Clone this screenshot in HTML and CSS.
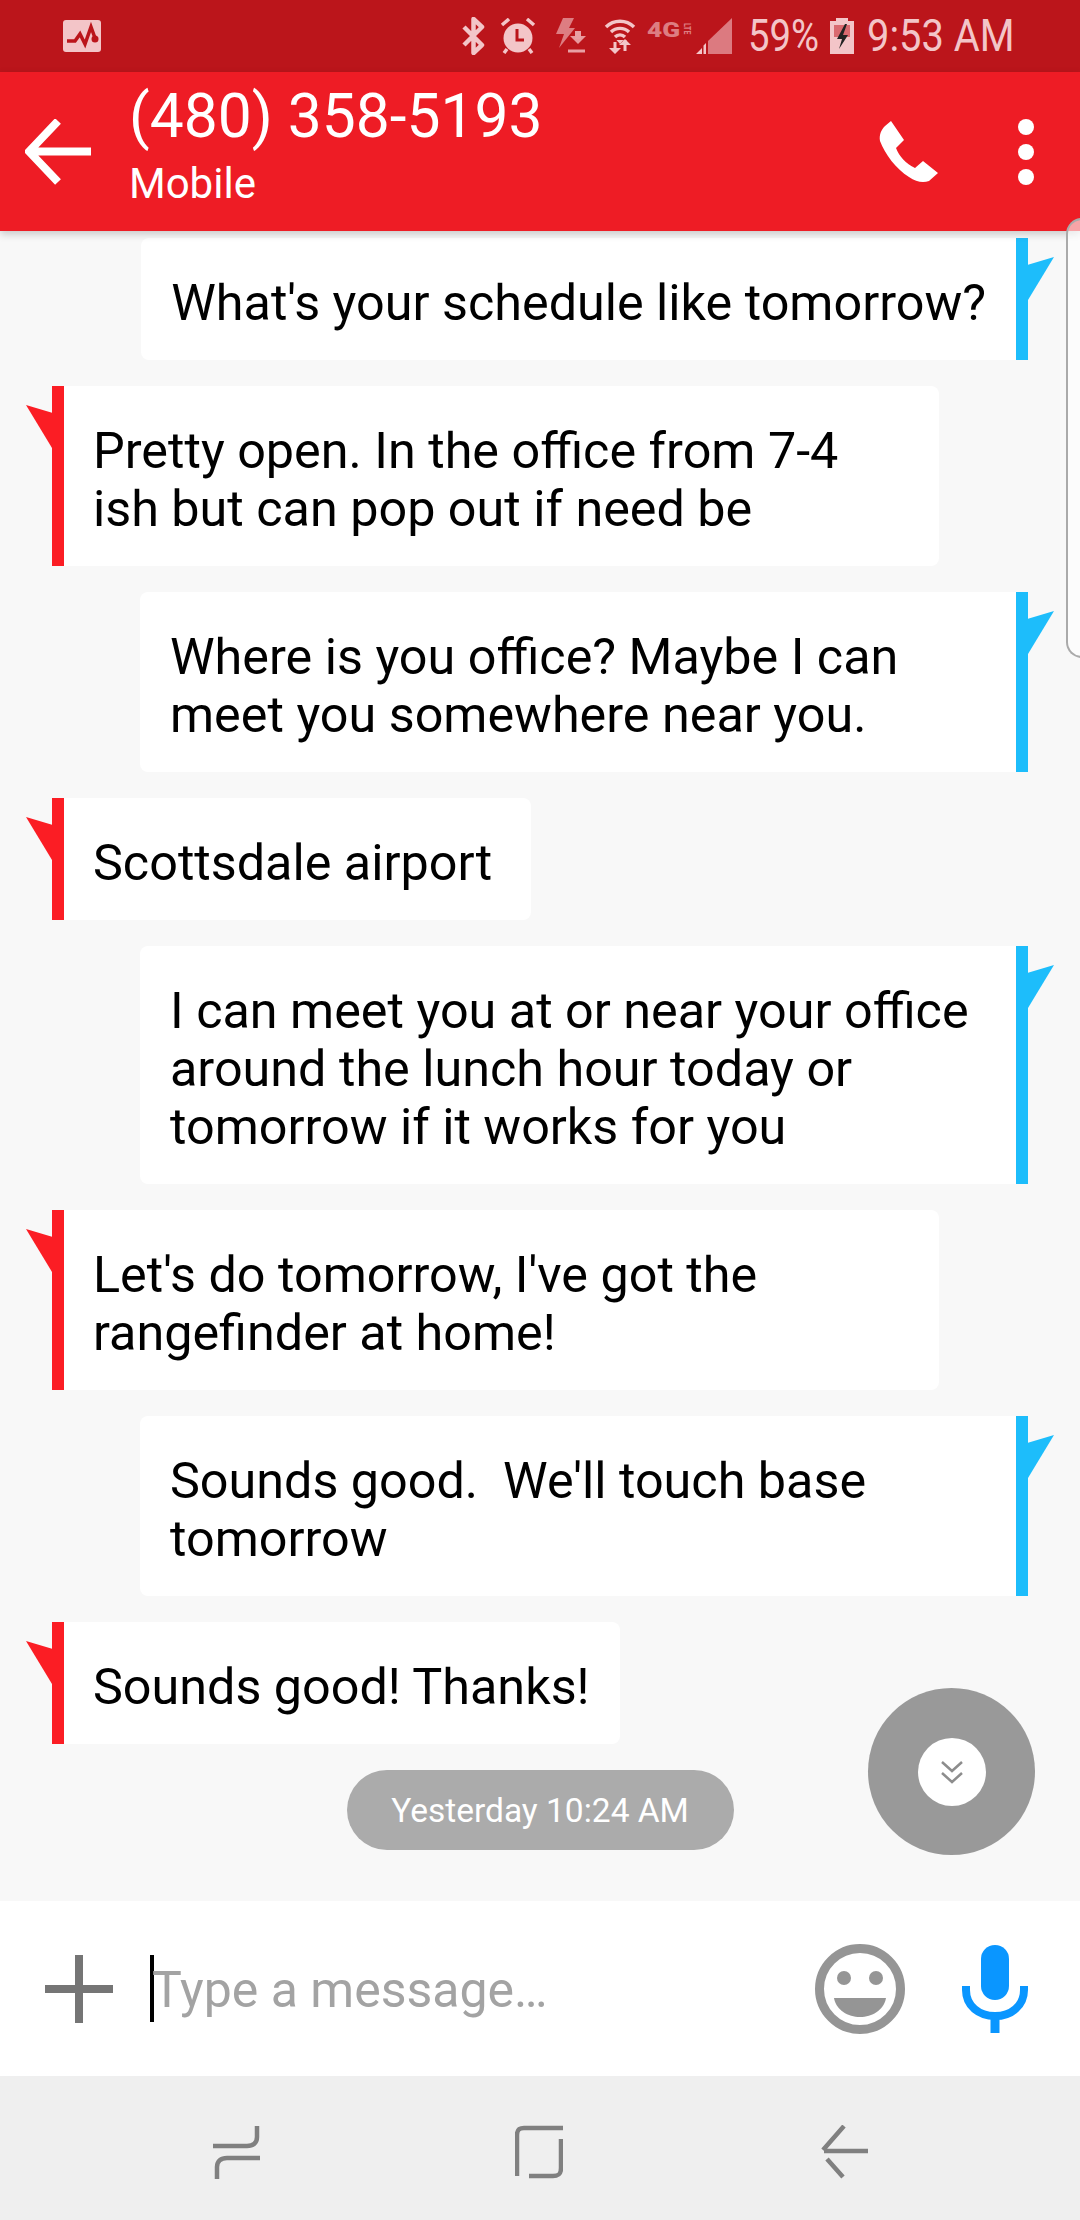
FILE: index.html
```html
<!DOCTYPE html>
<html>
<head>
  <title>Messages</title>
  <link rel="stylesheet" href="styles.css">
</head>
<body>
  <div class="screen">
    <div class="status-bar">
      <svg class="st-pulse" viewBox="0 0 38 32"><rect width="38" height="32" rx="3" fill="#f3c5c8"/><path d="M4 21h8l5-7 5 10 6-17 4 11" fill="none" stroke="#bb151b" stroke-width="3.500"/><circle cx="32" cy="19" r="3.500" fill="#bb151b"/></svg>
      <div class="st-right">
        <svg class="st-bt" viewBox="0 0 25 38"><path d="M3 10l18 18-8.500 8V2l8.500 8L3 28" fill="none" stroke="#f3c5c8" stroke-width="4.500" stroke-linejoin="round"/></svg>
        <svg class="st-alarm" viewBox="0 0 36 36"><circle cx="18" cy="20" r="14.500" fill="#f3c5c8"/><path d="M2 7l7-6M34 7l-7-6M7 31l-3 4M29 31l3 4" stroke="#f3c5c8" stroke-width="3.500" fill="none"/><path d="M17 11v11h7" stroke="#bb151b" stroke-width="3" fill="none"/></svg>
        <svg class="st-flash" viewBox="0 0 31 36"><path d="M8 0h11l-5 10h6L4 30l5-14H1z" fill="#dd7d82"/><path d="M15 18l8 8 8-8z" fill="#e8999d"/><path d="M23 13v8" stroke="#e8a0a4" stroke-width="6"/><path d="M13 33h17" stroke="#e8a0a4" stroke-width="3"/></svg>
        <svg class="st-wifi" viewBox="0 0 32 36"><path d="M2 9a20 20 0 0 1 28 0M7 14a13 13 0 0 1 18 0M11 19a7 7 0 0 1 10 0" fill="none" stroke="#f3c5c8" stroke-width="3.400"/><path d="M16 26l-3.500-4h7z" fill="#f3c5c8"/><path d="M11 24v8M21 22v11" stroke="#f3c5c8" stroke-width="3"/><path d="M5 30h12l-6 6zM15 27h12l-6-6z" fill="#f3c5c8"/></svg>
        <span class="st-lte">4G<span class="st-lte-small">LTE</span></span>
        <svg class="st-signal" viewBox="0 0 36 36"><path d="M36 0v36H12V23z" fill="#dc7a80"/><path d="M6 30v6H0zM10 25v11H7.500V27.500z" fill="#f3c5c8"/></svg>
        <span class="st-text st-pct">59%</span>
        <svg class="st-batt" viewBox="0 0 24 36"><path d="M6 0h12v3h6v33H0V3h6z" fill="#f3c5c8"/><path d="M4 7h16v12H4z" fill="#d96a70"/><path d="M15 6L7 21h5l-3 10 9-14h-5l4-11z" fill="#222"/></svg>
        <span class="st-text st-time">9:53 AM</span>
      </div>
    </div>

    <div class="app-bar">
      <svg class="back" viewBox="0 0 66 66"><path d="M66 32.500H6M33 2L4 32.500 33 63" fill="none" stroke="#fff" stroke-width="8"/></svg>
      <div class="contact">
        <div class="number">(480) 358-5193</div>
        <div class="kind">Mobile</div>
      </div>
      <svg class="phone" viewBox="0 0 60 62"><path d="M12 0l13 19-8 8c3 8 10 16 19 20l8-7 15 12-9 8c-6 2-13 1-20-4C17 48 6 33 1 20c-1-6 1-11 5-15z" fill="#fff"/></svg>
      <div class="dots"><i></i><i></i><i></i></div>
    </div>

    <div class="thread">
      <div class="msg out">
        <div class="bubble">What's your schedule like tomorrow?</div>
      </div>
      <div class="msg in wide">
        <div class="bubble">Pretty open. In the office from 7-4<br>ish but can pop out if need be</div>
      </div>
      <div class="msg out wide">
        <div class="bubble">Where is you office? Maybe I can<br>meet you somewhere near you.</div>
      </div>
      <div class="msg in loose">
        <div class="bubble">Scottsdale airport</div>
      </div>
      <div class="msg out wide">
        <div class="bubble">I can meet you at or near your office<br>around the lunch hour today or<br>tomorrow if it works for you</div>
      </div>
      <div class="msg in wide">
        <div class="bubble">Let's do tomorrow, I've got the<br>rangefinder at home!</div>
      </div>
      <div class="msg out wide">
        <div class="bubble">Sounds good.  We'll touch base<br>tomorrow</div>
      </div>
      <div class="msg in">
        <div class="bubble">Sounds good! Thanks!</div>
      </div>
      <div class="stamp">Yesterday 10:24 AM</div>

      <div class="scroll-btn">
        <div class="scroll-inner">
          <svg viewBox="0 0 24 24" width="24" height="24"><path d="M2 2l10 9 10-9M2 13l10 9 10-9" fill="none" stroke="#8d8d8d" stroke-width="2.500"/></svg>
        </div>
      </div>
    </div>

    <div class="composer">
      <svg class="plus" viewBox="0 0 68 68"><path d="M34 0v68M0 34h68" stroke="#757575" stroke-width="8"/></svg>
      <div class="field"><span class="caret"></span><span class="hint">Type a message…</span></div>
      <svg class="smile" viewBox="0 0 90 90"><circle cx="45" cy="45" r="40.500" fill="none" stroke="#959595" stroke-width="9"/><circle cx="29" cy="34" r="7" fill="#959595"/><circle cx="61" cy="34" r="7" fill="#959595"/><path d="M19 54h52c-2 12-14 19-26 19S21 66 19 54z" fill="#959595"/></svg>
      <svg class="mic" viewBox="0 0 66 88"><rect x="19" y="0" width="28" height="55" rx="14" fill="#0a96ff"/><path d="M4 41v4c0 16 13 26 29 26s29-10 29-26v-4" fill="none" stroke="#0a96ff" stroke-width="8"/><path d="M33 70v18" stroke="#0a96ff" stroke-width="9"/></svg>
    </div>

    <div class="nav-bar">
      <svg class="nav-icon" viewBox="0 0 48 54"><path d="M0 21h34c6 0 10-3 10-9V1M47 33H14c-6 0-10 3-10 9v12" fill="none" stroke="#808080" stroke-width="4.500"/></svg>
      <svg class="nav-icon" viewBox="0 0 48 54"><path d="M48 3H9C4 3 2 5 2 10v41M14 51h24c6 0 8-2 8-8V14" fill="none" stroke="#808080" stroke-width="4.500"/></svg>
      <svg class="nav-icon" viewBox="0 0 48 54"><path d="M24 1L3 25M48 26H4M7 34l16 18" fill="none" stroke="#808080" stroke-width="4.500"/></svg>
    </div>

    <div class="scroll-thumb"></div>
  </div>
</body>
</html>
```

FILE: styles.css
```css
html, body {
  margin: 0;
  padding: 0;
}
body {
  font-family: Roboto, "Noto Sans", sans-serif;
  background-color: #f8f8f8;
}
.screen {
  position: relative;
  width: 1080px;
  height: 2220px;
  display: flex;
  flex-direction: column;
  overflow: hidden;
}

/* status bar */
.status-bar {
  height: 72px;
  background-color: #bb151b;
  color: #f3c5c8;
  display: flex;
  align-items: center;
  padding: 0 70px 0 63px;
}
.st-pulse {
  width: 38px;
  height: 32px;
}
.st-right {
  margin-left: auto;
  display: flex;
  align-items: center;
}
.st-bt { width: 25px; height: 38px; }
.st-alarm { width: 36px; height: 36px; margin-left: 14px; }
.st-flash { width: 31px; height: 36px; margin-left: 19px; }
.st-wifi { width: 32px; height: 36px; margin-left: 18px; }
.st-lte {
  width: 41px;
  margin-left: 11px;
  margin-top: -12px;
  font-size: 21px;
  line-height: 24px;
  font-weight: 900;
  color: #dd7d82;
  white-space: nowrap;
  transform: scaleX(1.25);
  transform-origin: left center;
}
.st-lte-small {
  display: inline-block;
  writing-mode: vertical-rl;
  font-size: 7px;
  line-height: 7px;
  margin-left: 1px;
  vertical-align: 3px;
}
.st-signal { width: 36px; height: 36px; margin-left: 8px; }
.st-text {
  display: inline-block;
  font-size: 44px;
  white-space: nowrap;
  transform: scaleX(0.87);
  transform-origin: left center;
}
.st-pct { width: 70px; margin-left: 16px; }
.st-batt { width: 24px; height: 36px; margin-left: 12px; }
.st-time {
  width: 143px;
  margin-left: 13px;
  transform: scaleX(0.905);
}

/* app bar */
.app-bar {
  position: relative;
  z-index: 2;
  height: 159px;
  background-color: #ee1c25;
  color: #fff;
  display: flex;
  align-items: center;
  box-shadow: 0 3px 8px rgba(0,0,0,0.2);
}
.back {
  width: 66px;
  height: 66px;
  margin-left: 25px;
}
.contact {
  margin-left: 38px;
  margin-top: -14px;
}
.number {
  font-size: 60.500px;
  line-height: 70px;
}
.kind {
  font-size: 42px;
  line-height: 48px;
  margin-top: 8px;
}
.phone {
  width: 60px;
  height: 62px;
  margin-left: auto;
}
.dots {
  display: flex;
  flex-direction: column;
  gap: 9px;
  margin: 0 46px 0 79px;
}
.dots i {
  display: block;
  width: 16px;
  height: 16px;
  border-radius: 50%;
  background-color: #fff;
}

/* messages */
.thread {
  position: relative;
  height: 1670px;
  padding-top: 7px;
  box-sizing: border-box;
  display: flex;
  flex-direction: column;
  gap: 26px;
}
.msg {
  display: flex;
}
.msg.in {
  justify-content: flex-start;
  padding-left: 52px;
}
.msg.out {
  justify-content: flex-end;
  padding-right: 52px;
}
.bubble {
  position: relative;
  box-sizing: border-box;
  background-color: #fff;
  padding: 36px 30px 28px;
  font-size: 50.300px;
  line-height: 58px;
  color: #000;
  white-space: pre-wrap;
}
.msg.in .bubble {
  border-left: 12px solid #fb1d24;
  padding-left: 29px;
  border-radius: 0 8px 8px 0;
}
.msg.out .bubble {
  border-right: 12px solid #1dbdfb;
  border-radius: 8px 0 0 8px;
}
.msg.in.wide .bubble {
  width: 887px;
}
.msg.out.wide .bubble {
  width: 888px;
}
.msg.loose .bubble {
  padding-right: 39px;
}
/* little flag on the colored bar */
.msg.in .bubble::before,
.msg.out .bubble::after {
  content: "";
  position: absolute;
  top: 19px;
  width: 26px;
  height: 43px;
}
.msg.in .bubble::before {
  left: -38px;
  background-color: #fb1d24;
  clip-path: polygon(0 0, 100% 18%, 100% 100%);
}
.msg.out .bubble::after {
  right: -38px;
  background-color: #1dbdfb;
  clip-path: polygon(100% 0, 0 18%, 0 100%);
}
.stamp {
  align-self: center;
  width: 387px;
  height: 80px;
  line-height: 82px;
  border-radius: 40px;
  background-color: #ababab;
  color: #fff;
  font-size: 33.500px;
  text-align: center;
}
.scroll-btn {
  position: absolute;
  left: 868px;
  top: 1457px;
  width: 167px;
  height: 167px;
  border-radius: 50%;
  background-color: #999;
  display: flex;
  align-items: center;
  justify-content: center;
}
.scroll-inner {
  width: 68px;
  height: 68px;
  border-radius: 50%;
  background-color: #fff;
  display: flex;
  align-items: center;
  justify-content: center;
}

/* input */
.composer {
  height: 175px;
  background-color: #fff;
  display: flex;
  align-items: center;
}
.plus {
  width: 68px;
  height: 68px;
  margin-left: 45px;
}
.field {
  margin-left: 37px;
  display: flex;
  align-items: center;
}
.caret {
  width: 4px;
  height: 67px;
  background-color: #000;
}
.hint {
  font-size: 50px;
  line-height: 60px;
  padding-top: 2px;
  color: #a3a3a3;
  margin-left: -2px;
}
.smile {
  width: 90px;
  height: 90px;
  margin-left: auto;
}
.mic {
  width: 66px;
  height: 88px;
  margin: 0 52px 0 57px;
}

/* bottom nav */
.nav-bar {
  flex: 1;
  background-color: #efefef;
  display: flex;
  align-items: center;
  padding-top: 8px;
}
.nav-icon {
  width: 48px;
  height: 54px;
}
.nav-icon:nth-child(1) { margin-left: 213px; }
.nav-icon:nth-child(2) { margin-left: 254px; }
.nav-icon:nth-child(3) { margin-left: 257px; }

.scroll-thumb {
  position: absolute;
  left: 1066px;
  top: 218px;
  width: 20px;
  height: 440px;
  box-sizing: border-box;
  border: 2px solid #aaa;
  border-right: none;
  border-radius: 16px 0 0 16px;
  background-color: rgba(255,255,255,0.6);
  z-index: 3;
}
```
